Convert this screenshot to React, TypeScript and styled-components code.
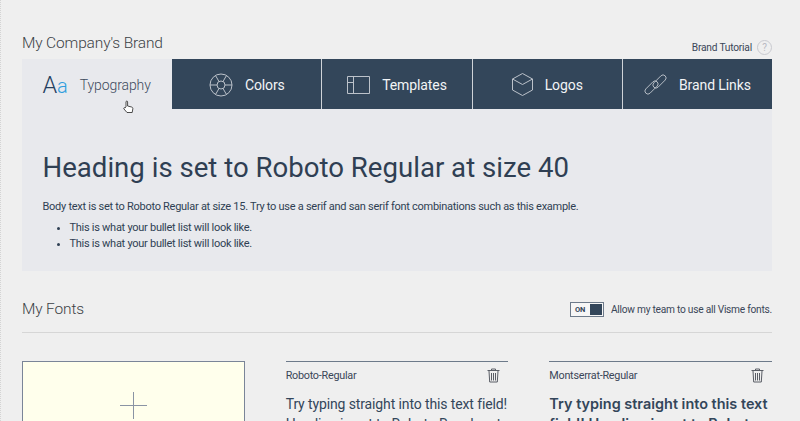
import React from 'react';
import styled, {createGlobalStyle} from 'styled-components';

const GlobalStyle = createGlobalStyle`
    html, body {
        margin: 0;
        height: 421px;
        overflow: hidden;
        background: #efefef;
    }
    body {
        font-family: Roboto, "Liberation Sans", sans-serif;
        color: #2f3f53;
    }
`

const Page = styled.div`
    box-sizing: border-box;
    width: 800px;
    height: 421px;
    overflow: hidden;
    padding: 34px 28px 0 21px;
    border-left: 1px dotted #d4d4d4;
`

const TitleRow = styled.div`
    display: flex;
    justify-content: space-between;
    align-items: flex-end;
    height: 25px;
`

const Title = styled.h2`
    margin: 0;
    font-size: 15.5px;
    letter-spacing: -0.15px;
    line-height: 19px;
    font-weight: 300;
    color: #3b3f46;
`

const BrandTitle = styled(Title)`
    padding-bottom: 6px;
`

const TutorialLink = styled.a`
    display: flex;
    align-items: center;
    gap: 5px;
    font-size: 10.2px;
    letter-spacing: -0.2px;
    color: #3a4658;
    padding-bottom: 4px;
`

const HelpCircle = styled.span`
    box-sizing: border-box;
    width: 15px;
    height: 15px;
    border: 1px solid #c9cad0;
    border-radius: 50%;
    color: #b9bac2;
    font-size: 10px;
    line-height: 13px;
    text-align: center;
`

const Tabs = styled.div`
    display: flex;
    height: 50px;
`

const Tab = styled.div<{$active?: boolean}>`
    box-sizing: border-box;
    flex: 1 1 0;
    display: flex;
    align-items: center;
    justify-content: center;
    gap: 12px;
    padding-top: 1px;
    font-size: 14px;
    letter-spacing: -0.1px;
    font-weight: ${({$active}) => ($active ? 300 : 400)};
    color: ${({$active}) => ($active ? '#3c4a5c' : '#f2f4f6')};
    background: ${({$active}) => ($active ? '#e8e9ed' : '#33465a')};
    border-left: ${({$active}) => ($active ? 'none' : '1px solid #cfd3d8')};
    position: relative;

    &:nth-child(2) {
        border-left-color: #e8e9ed;
    }
`

const TypeGlyph = styled.span`
    font-size: 23.5px;
    font-weight: 300;
    color: #24405f;

    b {
        font-weight: 300;
        font-size: 20px;
        color: #2f9ede;
    }
`

const Cursor = styled.svg`
    position: absolute;
    left: 101px;
    top: 41px;
`

const Panel = styled.div`
    box-sizing: border-box;
    height: 162px;
    background: #e8e9ed;
    padding: 42px 20.5px 0;
`

const Heading = styled.h1`
    margin: 0 0 14px;
    font-size: 27.6px;
    line-height: 34px;
    font-weight: 400;
    color: #2f3f53;
`

const BodyText = styled.p`
    margin: 0 0 6px;
    font-size: 11px;
    letter-spacing: -0.27px;
    line-height: 15px;
    color: #2f3f53;
`

const BulletList = styled.ul`
    margin: 0;
    padding-left: 27px;
    font-size: 11px;
    letter-spacing: -0.27px;
    line-height: 16px;
    color: #2f3f53;
`

const FontsHeader = styled.div`
    display: flex;
    justify-content: space-between;
    align-items: center;
    margin-top: 26px;
    height: 24px;
    padding-bottom: 11px;
    border-bottom: 1px solid #d6d6d6;
`

const ToggleRow = styled.div`
    display: flex;
    align-items: center;
    gap: 7px;
    font-size: 10.2px;
    letter-spacing: -0.25px;
    color: #3a4658;
`

const Toggle = styled.div`
    box-sizing: border-box;
    width: 34px;
    height: 15px;
    border: 1px solid #6d7a8a;
    background: #f6f6f6;
    display: flex;
    align-items: center;
    justify-content: space-between;
    padding: 1px 1px 1px 4px;
    font-size: 7.5px;
    letter-spacing: 0;
    font-weight: 700;
    color: #33465a;
`

const ToggleKnob = styled.span`
    width: 12px;
    height: 11px;
    background: #33465a;
`

const FontGrid = styled.div`
    display: grid;
    grid-template-columns: repeat(3, 1fr);
    column-gap: 41px;
    margin-top: 28px;
`

const UploadCard = styled.div`
    box-sizing: border-box;
    height: 120px;
    background: #ffffec;
    border: 1px solid #7a8598;
    display: flex;
    justify-content: center;
    padding-top: 30px;
`

const FontCard = styled.div`
    border-top: 1px solid #6d7a8a;
`

const FontCardHead = styled.div`
    display: flex;
    justify-content: space-between;
    align-items: center;
    height: 27px;
    padding-right: 8px;
    font-size: 10.8px;
    letter-spacing: -0.25px;
    color: #3a4658;
`

const Sample = styled.div<{$wide?: boolean}>`
    margin-top: 5px;
    font-family: ${({$wide}) => ($wide ? 'Inter, sans-serif' : 'Roboto, sans-serif')};
    font-size: ${({$wide}) => ($wide ? '14.45px' : '14px')};
    letter-spacing: ${({$wide}) => ($wide ? '0' : '-0.12px')};
    font-weight: ${({$wide}) => ($wide ? 600 : 400)};
    line-height: 20px;
    color: #33465a;
`

const Trash = () => (
    <svg width="13" height="15" viewBox="0 0 13 15" fill="none" stroke="#5a5e66" strokeWidth="1">
        <path d="M0.5 2.5h12M4.5 2.5V1h4v1.5M2 3l.7 11h7.600L11 3M4.500 5v7.500M6.500 5v7.500M8.500 5v7.500"/>
    </svg>
)

const App: React.FC = () => (
    <>
        <GlobalStyle/>
        <Page>
            <TitleRow>
                <BrandTitle>My Company's Brand</BrandTitle>
                <TutorialLink>Brand Tutorial <HelpCircle>?</HelpCircle></TutorialLink>
            </TitleRow>
            <Tabs>
                <Tab $active>
                    <TypeGlyph>A<b>a</b></TypeGlyph>
                    Typography
                    <Cursor width="11" height="14" viewBox="0 0 11 14" fill="#fff" stroke="#222" strokeWidth="0.8">
                        <path d="M3 7V2c0-1.300 1.600-1.300 1.600 0v4l4 1c1 .3 1.400 1 1.200 2l-.6 3.500H4L1 9c-.7-.9.300-1.800 1.100-1.100z"/>
                    </Cursor>
                </Tab>
                <Tab>
                    <svg width="24" height="24" viewBox="0 0 24 24" fill="none" stroke="#bcc2ca" strokeWidth="1">
                        <circle cx="12" cy="12" r="11"/>
                        <circle cx="12" cy="12" r="4"/>
                        <path d="M1 12h7M16 12h7M6.500 2.500l3.500 6M14 15.500l3.500 6M6.500 21.500l3.500-6M14 8.500l3.500-6"/>
                    </svg>
                    Colors
                </Tab>
                <Tab>
                    <svg width="23" height="18" viewBox="0 0 23 18" fill="none" stroke="#bcc2ca" strokeWidth="1">
                        <path d="M.5.500h22v17H.5zM6.500.500v17M.5 6.500h6"/>
                    </svg>
                    Templates
                </Tab>
                <Tab>
                    <svg width="21" height="23" viewBox="0 0 21 23" fill="none" stroke="#bcc2ca" strokeWidth="1">
                        <path d="M10.500.500l10 5.500v11l-10 5.500-10-5.500V6zM.5 6l10 5.500L20.500 6"/>
                    </svg>
                    Logos
                </Tab>
                <Tab>
                    <svg width="23" height="23" viewBox="0 0 23 23" fill="none" stroke="#bcc2ca" strokeWidth="0.9">
                        <rect x="-0.500" y="11.500" width="16" height="6" rx="3" transform="rotate(-45 7.500 14.500)"/>
                        <rect x="7.500" y="5.500" width="16" height="6" rx="3" transform="rotate(-45 15.500 8.500)"/>
                    </svg>
                    Brand Links
                </Tab>
            </Tabs>
            <Panel>
                <Heading>Heading is set to Roboto Regular at size 40</Heading>
                <BodyText>Body text is set to Roboto Regular at size 15. Try to use a serif and san serif font combinations such as this example.</BodyText>
                <BulletList>
                    <li>This is what your bullet list will look like.</li>
                    <li>This is what your bullet list will look like.</li>
                </BulletList>
            </Panel>
            <FontsHeader>
                <Title>My Fonts</Title>
                <ToggleRow>
                    <Toggle>ON <ToggleKnob/></Toggle>
                    Allow my team to use all Visme fonts.
                </ToggleRow>
            </FontsHeader>
            <FontGrid>
                <UploadCard>
                    <svg width="27" height="27" viewBox="0 0 27 27" stroke="#8a94a4" strokeWidth="1">
                        <path d="M13.500 0v27M0 13.500h27"/>
                    </svg>
                </UploadCard>
                <FontCard>
                    <FontCardHead>Roboto-Regular <Trash/></FontCardHead>
                    <Sample>Try typing straight into this text field! Heading is set to Roboto Regular at</Sample>
                </FontCard>
                <FontCard>
                    <FontCardHead>Montserrat-Regular <Trash/></FontCardHead>
                    <Sample $wide>Try typing straight into this text field! Heading is set to Roboto</Sample>
                </FontCard>
            </FontGrid>
        </Page>
    </>
);

export default App;
